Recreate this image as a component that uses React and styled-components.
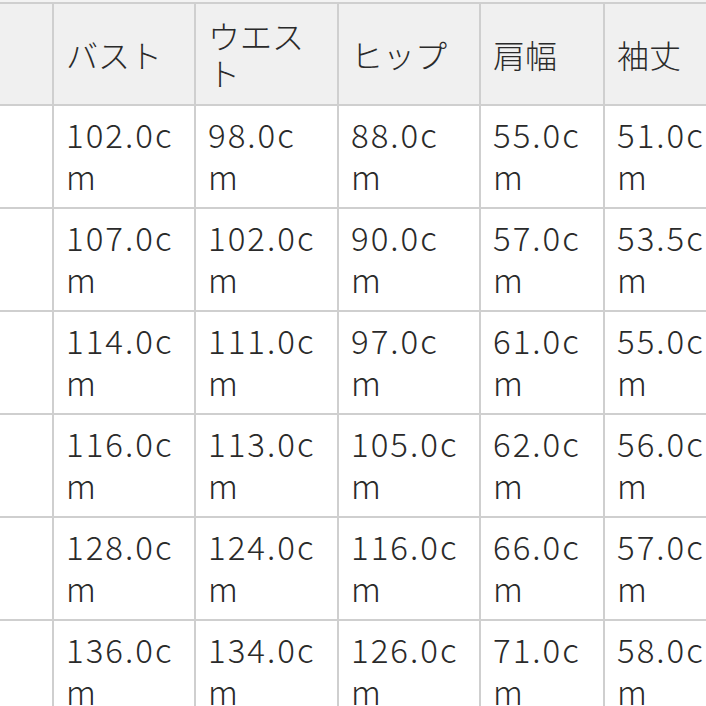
import React from 'react';
import styled, {createGlobalStyle} from 'styled-components';

const GlobalStyle = createGlobalStyle`
  html, body {
    margin: 0;
    padding: 0;
    background: #ffffff;
  }
  body {
    font-family: "Noto Sans CJK JP", "Noto Sans", sans-serif;
    font-weight: 300;
    color: #2a2a2a;
  }
`;

const Viewport = styled.div`
  width: 706px;
  height: 706px;
  overflow: hidden;
  background: #f3f3f3;
  padding-top: 2px;
  box-sizing: border-box;
`;

const SizeTable = styled.div`
  display: grid;
  grid-template-columns: 54px 142px 143px 142px 124px 142px;
  grid-auto-rows: 103px;
  grid-template-rows: 102px;
  width: max-content;
  border-top: 2px solid #cfcfcf;
  background: #ffffff;
`;

const Cell = styled.div`
  box-sizing: border-box;
  border-right: 2px solid #cfcfcf;
  border-bottom: 2px solid #cfcfcf;
  padding: ${p => (p.$head ? '0 10px 0 12px' : '7px 16px 0 12px')};
  background: ${p => (p.$head ? '#f0f0f0' : '#ffffff')};
  display: flex;
  align-items: ${p => (p.$head ? 'center' : 'flex-start')};
  font-size: ${p => (p.$head ? '32px' : '33px')};
  line-height: ${p => (p.$head ? '37px' : '42px')};
  letter-spacing: ${p => (p.$head ? '0' : '2px')};
  word-break: break-all;
  overflow: hidden;
`;

const Text = styled.span`
  display: block;
  width: 100%;
`;

const headers = ['バスト', 'ウエスト', 'ヒップ', '肩幅', '袖丈'];

const rows = [
  ['102.0', '98.0', '88.0', '55.0', '51.0'],
  ['107.0', '102.0', '90.0', '57.0', '53.5'],
  ['114.0', '111.0', '97.0', '61.0', '55.0'],
  ['116.0', '113.0', '105.0', '62.0', '56.0'],
  ['128.0', '124.0', '116.0', '66.0', '57.0'],
  ['136.0', '134.0', '126.0', '71.0', '58.0'],
];

function App() {
  return (
    <>
      <GlobalStyle />
      <Viewport>
        <SizeTable>
          <Cell $head />
          {headers.map(h => (
            <Cell $head key={h}><Text>{h}</Text></Cell>
          ))}
          {rows.map((row, i) => (
            <React.Fragment key={i}>
              <Cell />
              {row.map((v, j) => (
                <Cell key={j}><Text>{v}cm</Text></Cell>
              ))}
            </React.Fragment>
          ))}
        </SizeTable>
      </Viewport>
    </>
  );
}

export default App;
